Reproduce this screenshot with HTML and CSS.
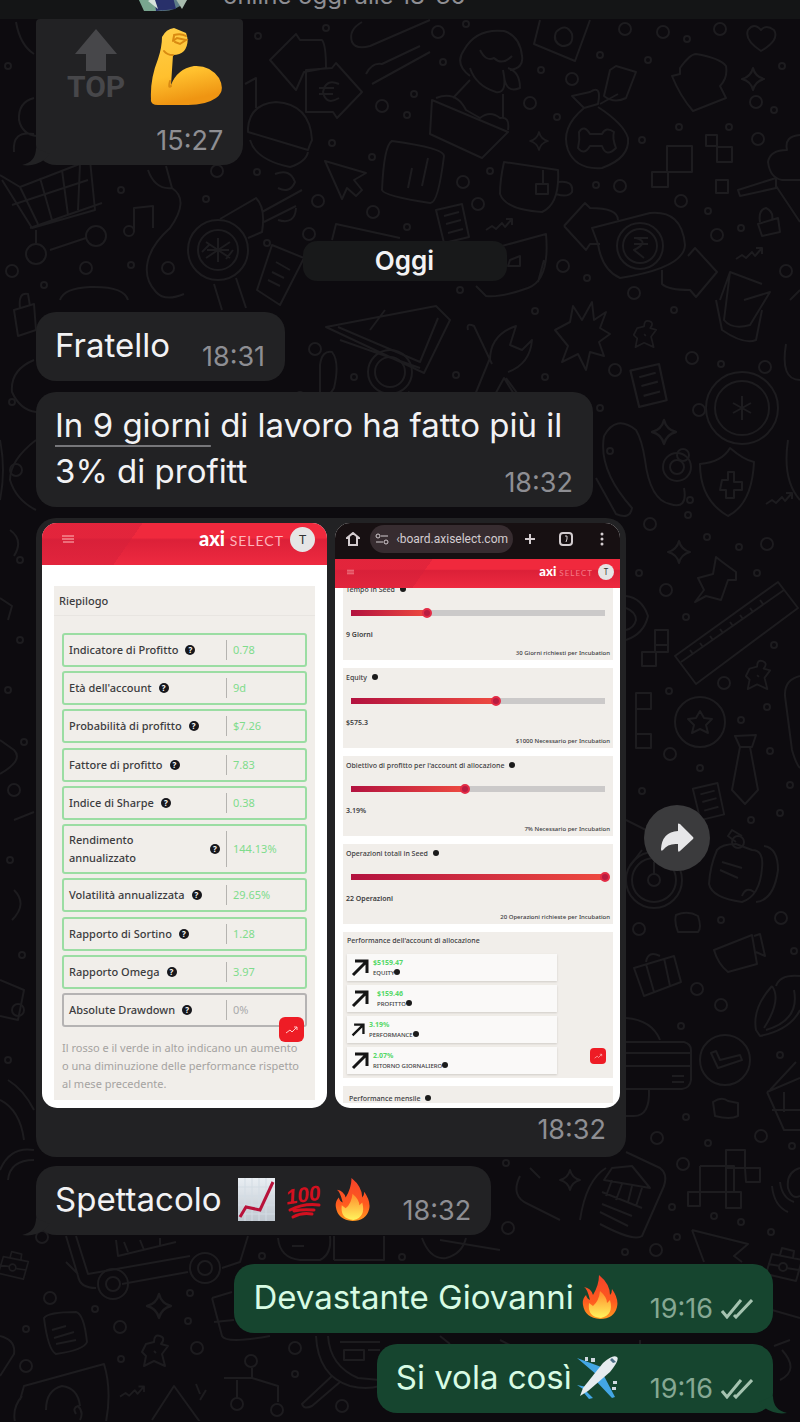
FILE: index.html
```html
<!DOCTYPE html>
<html lang="it">
<head>
  <meta charset="UTF-8">
  <meta name="viewport" content="width=device-width, initial-scale=1.0">
  <title>Chat</title>
  <link rel="stylesheet" href="styles.css">
</head>
<body>
  <!-- wallpaper -->
  <svg class="wallpaper" viewBox="0 0 800 1422" preserveAspectRatio="xMidYMin slice" aria-hidden="true">
    <defs>
      <marker id="dot" markerWidth="10" markerHeight="10" refX="5" refY="5" markerUnits="userSpaceOnUse"><circle class="ring" cx="5" cy="5" r="3"/></marker>
      <marker id="ring" markerWidth="18" markerHeight="18" refX="9" refY="9" markerUnits="userSpaceOnUse"><circle class="ring" cx="9" cy="9" r="6"/></marker>
      <symbol id="star" viewBox="0 0 20 20" overflow="visible"><path d="M10 0Q12 8 20 10Q12 12 10 20Q8 12 0 10Q8 8 10 0Z"/></symbol>
      <symbol id="note" viewBox="0 0 36 40" overflow="visible"><path d="M2 6L28 0L35 33L10 39ZM10 12L25 8M12 20L27 16M14 29L29 25"/></symbol>
      <symbol id="zig" viewBox="0 0 26 14" overflow="visible"><path d="M0 12L6 8L10 11L16 5L19 9L26 1M20 1H26V7"/></symbol>
      <symbol id="pin" viewBox="0 0 30 36" overflow="visible"><path d="M6 10L14 8Q14 0 20 2T21 10L28 12L22 20L25 32L14 27L4 32L6 22L2 18ZM14 17L16 19"/></symbol>
      <symbol id="case" viewBox="0 0 36 36" overflow="visible"><path d="M4 8L34 14L28 35L-2 28ZM12 9L14 2L26 5L25 12M0 18L12 20M18 22L31 24"/><circle cx="15" cy="21" r="4"/></symbol>
    </defs>

    <path class="marks dots" d="M8 66L258 36L326 28L332 143L372 157L257 172L121 190L206 199L131 265L44 285L267 243L414 94L407 115L443 62L466 24L490 171L407 227L541 70L557 117L600 55L648 60L642 140L596 185L679 127L729 127L687 39L774 110L782 66L708 211L741 228L587 278L460 290L354 377L456 375L535 311L545 377L600 408L674 310L721 364L690 500L707 537L610 451L688 515L739 547L757 573L639 573L686 617L774 645L669 691L741 720L767 707L770 751L700 768L642 791L790 785L780 813L751 820L721 920L794 951L681 1026L780 1055L686 1117L708 1143L792 1146L672 1207L714 1216L741 1222L677 1237L771 1232L625 1252L190 1293L95 1309L26 1329L188 1321L121 1359L295 1374L262 1256L402 1257L506 1163L12 402L20 560L8 690L24 742L10 860L22 955L8 1060L300 395L20 640"/>
    <path class="marks rings" d="M382 106L318 201L309 234L373 212L168 268L86 268L12 271L217 171L438 32L530 103L572 79L625 29L663 32L720 29L756 102L758 139L463 182L478 204L620 186L681 201L717 235L786 271L563 266L634 293L315 349L444 422L615 370L692 358L765 367L699 410L683 455L650 524L767 544L666 590L724 683L670 754L781 918L639 929L697 989L721 1005L761 1136L683 1164L657 1138L656 1250L50 1298L26 1366L197 1348L295 1348L120 1327L42 1237L508 1228L342 1406L237 1404L277 1410L251 1361L16 470L14 790L18 1010"/>

    <!-- top left: cart, flash drive, note -->
    <path d="M0 175L20 187L90 160L95 210L32 228L2 180M20 187L38 224M40 178L52 220M62 170L68 215M80 164L78 210M12 205L88 180M30 228L102 203M36 230V245M50 250L86 238"/>
    <circle cx="36" cy="254" r="10"/><circle cx="96" cy="236" r="10"/>
    <path d="M148 170Q155 190 172 188L166 166M172 188Q190 200 170 228C145 250 140 275 156 292Q165 302 184 294M134 232V208L153 206V228"/>
    <circle cx="129" cy="231" r="5"/><path d="M16 22Q20 45 34 54M34 98Q18 102 19 120Q22 134 36 136M34 134Q12 130 14 152"/>
    <!-- magnifier with tools -->
    <circle cx="218" cy="250" r="30"/><circle cx="218" cy="250" r="20"/><path d="M206 242L230 258M206 258L230 242M218 238V262M207 250H229M202 252L210 244M226 259L233 250M220 219L256 198Q266 208 262 232L248 238M262 212L302 190M264 222L296 206M275 174Q290 168 295 182Q290 194 278 188M278 220Q295 225 296 208M214 284L222 310M236 278L246 308M272 245L304 258L280 305L257 290ZM272 272L284 278M268 280L280 286M276 262L290 270"/>
    <!-- tags, burger, cursor -->
    <path d="M270 60L296 34L300 40H322Q326 45 326 68L304 72L296 90ZM306 70L332 68L336 63L362 92L337 118L333 112H306ZM339 84Q326 78 323 92Q326 106 339 98M319 88H334M319 94H333M362 22Q348 30 352 42Q356 50 370 46L430 20M372 84L430 52M366 74Q372 62 382 64L420 46"/>
    <path d="M248 128Q250 104 276 102Q310 104 312 140Q310 144 308 150L248 132ZM250 140Q256 160 290 167Q306 162 308 152"/>
    <path d="M325 161L366 173L354 180L362 190L356 196L347 188L342 199ZM392 141Q384 145 382 190Q384 196 430 203Q438 204 444 156Q444 148 392 141ZM412 168L408 188M428 158L422 186"/>
    <path d="M245 84L256 78V108M332 240L336 224L400 238M60 300Q64 288 90 287Q124 286 128 300"/>
    <!-- dog in envelope, picture, bag -->
    <path d="M470 76Q454 64 464 50Q476 28 504 31Q520 36 522 56Q524 68 510 70M480 50Q486 62 494 58Q502 66 512 56M470 68Q476 86 496 92Q508 94 503 70M508 68Q520 72 520 88Q506 94 504 76M470 80L453 98M503 94V118M432 100L508 132L482 158L430 134ZM436 98Q456 90 466 110L480 118Q490 110 500 118Q510 116 508 130"/>
    <path d="M540 20L534 44L575 61L590 20M556 32Q566 22 572 34Q574 46 562 46Q552 42 556 32M616 66L636 72L626 98Q614 104 604 96L610 70ZM572 96L590 92Q602 84 598 104L584 108ZM584 108Q560 128 568 150Q576 170 602 168Q630 158 628 138Q624 124 598 107M579 132Q584 124 590 134H602Q606 126 614 132Q612 138 616 148Q606 158 602 146H590Q584 156 578 148Q580 140 579 132ZM600 104L618 94"/>
    <path d="M680 68Q690 54 696 54Q720 58 726 66Q728 78 720 86L726 98L693 111Q680 96 672 76L680 74ZM748 30Q754 22 761 30Q766 24 774 30Q780 40 761 51Q744 40 748 30Z"/>
    <use href="#star" x="742" y="68" width="22" height="22"/><use href="#star" x="530" y="132" width="18" height="18"/>
    <path d="M667 146H692V172H667ZM652 172H668V187H652ZM706 135H717V146H706ZM717 147H732V162H717ZM716 180H728V193H716ZM800 135Q784 136 787 150Q770 150 768 162Q770 178 782 180H800M738 190L776 178V188L740 196ZM776 186L800 222"/>
    <path d="M504 162L558 170Q560 204 542 212Q506 210 500 194Q500 180 504 162ZM543 170V184M536 184H548V194H536ZM558 182Q574 180 572 192Q568 198 556 194"/>
    <use href="#note" x="434" y="204" width="36" height="40"/><use href="#zig" x="486" y="218" width="26" height="14"/><use href="#zig" x="736" y="247" width="26" height="14"/>
    <path d="M564 226L585 203L590 208Q618 208 618 220M564 226L586 250L590 244H600M592 228L650 213Q682 210 685 245Q684 268 620 278Q602 270 598 244ZM662 270V284Q668 290 690 290L696 297L717 272L695 248L688 256M634 238H648M634 244H648M636 238Q650 242 634 250L644 258"/>
    <circle cx="640" cy="246" r="23"/><circle cx="640" cy="246" r="17"/>
    <path d="M760 222Q758 210 766 208Q774 212 772 220M758 224L778 218L780 232L762 236ZM720 300L730 272L762 284M730 272L724 320Q732 330 750 325L770 292L744 300M502 246L546 234Q550 280 528 288Q500 298 486 296L476 286M510 260L520 256V266H508ZM538 282L544 260"/>
    <!-- ruler, tools and star -->
    <path d="M326 327L436 306L450 320L424 373ZM338 327L420 362L438 318M370 330L385 310M340 340L420 368M468 330Q466 322 474 326L492 364M490 358L468 412Q470 424 480 422L504 378L530 420Q534 424 528 408L506 378M490 360Q490 335 516 326L510 345L522 350L532 340Q530 364 508 372"/>
    <path d="M555 330L570 322L573 306L582 320L592 302L594 320L606 312L600 328L610 334L599 342L604 356L590 352L586 370L578 354L562 362L568 346Z"/>
    <use href="#pin" x="632" y="318" width="26" height="34"/><use href="#note" x="628" y="364" width="40" height="44"/>
    <circle cx="390" cy="372" r="22"/><circle cx="390" cy="372" r="15"/><path d="M320 365Q322 350 332 352Q340 362 334 388Q326 402 320 392ZM408 392L412 394M716 300L722 330Q744 345 756 340L762 310"/>
    <circle cx="742" cy="408" r="36"/><circle cx="742" cy="408" r="27"/><path d="M742 396V420M733 403L751 413M733 413L751 403"/>
    <use href="#star" x="652" y="414" width="24" height="36"/><circle cx="677" cy="467" r="14"/><circle cx="677" cy="467" r="7"/>
    <path d="M604 436Q598 470 632 508Q630 520 616 514L596 478M604 436Q616 414 636 430Q642 440 645 460Q650 500 670 504Q688 510 684 488M700 464Q722 462 730 448Q744 460 754 462Q752 504 728 516Q700 500 700 464ZM722 480H728V472H734V482H742V490H734V498H726V490H720Z"/>
    <use href="#zig" x="766" y="492" width="26" height="14"/><path d="M790 300L800 290M786 344Q780 380 800 380M788 440Q782 480 800 500"/>
    <!-- left edge -->
    <path d="M14 310L34 304L36 330L18 336ZM20 308Q18 292 28 294L30 306M34 360Q10 370 12 392Q20 410 36 412M36 440Q10 460 10 480Q16 500 36 510M0 440Q6 470 0 500M0 598L12 606L8 620M10 530Q24 540 14 556M0 740L14 750Q24 760 0 774M14 820L34 812M14 890Q28 904 12 920M0 980L24 990L18 1020L0 1016M8 1080Q24 1090 34 1110M0 1100Q20 1110 24 1140"/>
    <!-- right column -->
    <use href="#star" x="668" y="541" width="22" height="22"/>
    <path d="M716 557Q722 562 736 572L736 580L728 580L721 600L706 596L695 602L704 590L698 578L713 574ZM675 656L778 582L798 608L696 684ZM681 662L784 590M690 650L693 654M700 643L703 647M710 636L713 640M720 629L723 633M730 622L733 626M740 615L743 619M750 608L753 612M760 600L763 604M655 630H668V652H655ZM642 652H656V666H642ZM668 645H655M636 693H651V709H636ZM636 709V734M636 734H651V748H636Z"/>
    <path d="M626 596Q642 598 648 616Q644 634 626 640M626 608Q636 612 636 620Q634 628 626 630"/>
    <use href="#pin" x="744" y="658" width="28" height="36"/><circle cx="700" cy="722" r="25"/><path d="M700 711L704 718L712 719L706 725L708 733L700 729L692 733L694 725L688 719L696 718Z"/>
    <path d="M735 736L756 735L752 747H740ZM740 747L732 790L745 804L758 790L750 747M800 676Q784 680 785 696L792 750Q796 764 800 768"/>
    <use href="#note" x="689" y="783" width="38" height="38"/>
    <circle cx="654" cy="880" r="28"/><circle cx="654" cy="880" r="22"/><circle cx="654" cy="880" r="6"/><path d="M626 820L650 832M630 866L642 850M654 874V862"/>
    <path d="M717 850Q722 844 736 844L752 850Q764 850 762 868Q760 896 742 902Q712 898 709 884Q710 866 717 850ZM764 846Q778 848 778 870Q774 900 756 902M722 862L742 868M720 870L738 878M736 842L728 836L732 830L742 836M742 896Q746 886 754 892"/><circle cx="738" cy="842" r="6"/>
    <path d="M676 915Q688 910 698 916Q702 928 698 932H678Q674 922 676 915ZM714 950L752 935L757 964L728 972Q718 964 714 950ZM754 936L760 934L765 956L756 952M634 968L674 956L681 982L644 996ZM646 964L654 992M664 958L670 986M646 962Q648 950 660 956"/>
    <path d="M626 1018Q652 1020 660 1040M626 1042H684Q691 1044 691 1050V1080Q690 1088 682 1089H626M626 1053H690M626 1066H691M672 1076H684M672 1082H684M649 1090Q650 1116 634 1116H626"/>
    <circle cx="725" cy="1060" r="25"/><path d="M711 1053L716 1051L720 1060L740 1055L742 1060L718 1068Z"/>
    <path d="M772 986Q752 1008 756 1030L760 1036Q790 1030 800 1010M772 986Q782 1000 764 1028M776 986Q780 974 800 976M766 1030Q800 1020 794 990M713 1102Q722 1096 728 1101L738 1103V1116Q730 1120 715 1116ZM767 1092L800 1078M767 1092L784 1130H800M772 1110H800M784 1092V1112M770 1090L796 1062"/>
    <path d="M700 1166H734V1193M726 1150H745V1168H726ZM745 1168H760V1182H746ZM688 1192H700V1206H688ZM700 1166V1192H741V1208H726V1150M626 1152L660 1168Q668 1174 664 1186L642 1236Q634 1242 600 1224M580 1220Q586 1180 606 1168M612 1168L632 1166L650 1188L604 1180ZM612 1180L606 1196M622 1184L616 1200M632 1186L628 1202M642 1188L636 1206M602 1192L642 1208M602 1204L632 1216M600 1212L628 1226"/>
    <path d="M772 1186Q774 1206 788 1212M780 1182Q782 1198 794 1202M800 1168Q786 1172 788 1188Q792 1200 800 1196M692 1230L748 1244L734 1256L742 1262M692 1230L704 1262"/>
    <use href="#case" x="768" y="1246" width="36" height="36"/>
    <!-- bottom -->
    <path d="M66 1236L78 1276Q80 1288 96 1288M76 1236L88 1274L190 1256M122 1284L188 1272M222 1268L240 1262L248 1236M116 1240L118 1256L176 1242M124 1242L128 1252M140 1240L144 1250M160 1238V1246M66 1262L78 1274"/>
    <circle cx="113" cy="1284" r="15"/><circle cx="113" cy="1284" r="7"/><circle cx="205" cy="1268" r="15"/><circle cx="205" cy="1268" r="7"/>
    <path d="M278 1238Q280 1258 300 1260H320Q332 1254 330 1236M334 1260V1236M334 1260H384V1236M422 1238Q430 1260 446 1258Q462 1254 466 1238M292 1246H304"/>
    <use href="#case" x="0" y="1248" width="30" height="34"/><use href="#star" x="147" y="1294" width="24" height="24"/><use href="#star" x="560" y="1170" width="20" height="20"/>
    <path d="M44 1318Q48 1312 76 1312Q84 1314 87 1342Q84 1350 56 1354Q48 1350 44 1318ZM52 1330L66 1326M54 1338L74 1332M56 1344L76 1340"/><use href="#pin" x="140" y="1332" width="30" height="40"/>
    <path d="M212 1298L232 1292M212 1298L222 1336Q226 1344 270 1336M214 1322L234 1320M0 1336Q16 1340 14 1354L0 1376M20 1400L24 1386L104 1364Q112 1390 106 1422M46 1410Q46 1390 62 1386Q78 1388 80 1406M15 1422Q12 1408 22 1396M152 1420L174 1386L200 1422M224 1378H252V1368M252 1378L278 1386V1402M237 1380V1398M76 1414Q72 1408 78 1406Q84 1412 80 1420M196 1384L200 1394M206 1390L200 1400"/>
    <use href="#zig" x="120" y="1384" width="24" height="16"/>
    <path d="M316 1336Q318 1376 350 1386Q366 1390 380 1386M328 1336Q330 1366 358 1378L380 1380M332 1376L302 1404Q304 1410 312 1406L340 1382M340 1342H380M344 1350H364V1360H344ZM368 1350H380M0 1170Q10 1146 34 1150M8 1180Q10 1160 34 1160M790 1340L774 1346M782 1350Q800 1370 780 1380M772 1310L800 1318M440 1240L500 1250M520 1176Q510 1196 528 1204L560 1220M640 1340V1345M530 1168L540 1178M500 1340L510 1345M440 1336L450 1344"/>
  </svg>

  <header class="topbar">
    <svg class="avatar" viewBox="0 0 62 62" role="img" aria-label="Foto profilo">
      <circle cx="31" cy="31" r="31" fill="#5d7c86"/>
      <path d="M6 49L20 40L30 62H12Z" fill="#79a58f"/><path d="M22 46L40 44L44 60L24 62Z" fill="#28306a"/><path d="M40 44L60 42L50 60Z" fill="#a8bcae"/><path d="M16 52L22 48L26 60Z" fill="#d7e2dc"/>
    </svg>
    <span class="status">online oggi alle 18-36</span>
  </header>

  <main class="chat">
    <div class="bubble in reaction">
      <div class="stickers">
        <span class="top-emoji">
          <svg viewBox="0 0 42 42" aria-hidden="true"><path fill="currentColor" d="M21 0L42 25H31V42H11V25H0Z"/></svg>
          TOP
        </span>
        <svg class="arm" viewBox="0 0 73 78" role="img" aria-label="Bicipite">
          <defs><linearGradient id="skin" x1="0" y1="0" x2="0.2" y2="1"><stop offset="0" stop-color="#ffcf49"/><stop offset=".65" stop-color="#ffc02e"/><stop offset="1" stop-color="#ef9512"/></linearGradient></defs>
          <path fill="url(#skin)" d="M12 10Q16 2 24 1L36 6Q40 16 34 24Q30 28 23 28L21 58Q27 42 44 39Q60 38 69 51Q76 64 66 71Q56 78 38 78H8Q0 78 1 72Q0 52 8 32Q12 20 12 10Z"/>
          <path fill="none" stroke="#d98a12" stroke-width="2" stroke-linecap="round" d="M24 8Q31 6 36 9M24 9L23 14M23 14L27 11L36 13L30 17L25 15M23 28Q17 28 14 24M21 59Q18 62 20 54"/>
        </svg>
      </div>
      <time>15:27</time>
      <svg class="tail" viewBox="0 0 28 18" aria-hidden="true"><path d="M14 0Q14 14 0 17Q12 19 22 12L28 6Z"/></svg>
    </div>

    <div class="date">Oggi</div>

    <div class="bubble in">
      <p>Fratello</p>
      <time>18:31</time>
    </div>

    <div class="bubble in long">
      <span class="underlined">In 9 giorni</span> di lavoro ha fatto più il 3% di profitt
      <time>18:32</time>
    </div>

    <div class="media-row">
      <div class="bubble in media">
        <div class="shots">
          <section class="shot">
            <div class="brandbar">
              <svg class="menu" viewBox="0 0 12 10" aria-hidden="true"><path d="M0 2H12M0 5H12M1 8H12"/></svg>
              <span class="brand"><b>axi</b> SELECT</span>
              <span class="user">T</span>
            </div>
            <div class="summary">
              <h2>Riepilogo</h2>
              <table>
                <tbody>
                  <tr><th>Indicatore di Profitto <i class="help">?</i></th><td>0.78</td></tr>
                  <tr><th>Età dell'account <i class="help">?</i></th><td>9d</td></tr>
                  <tr><th>Probabilità di profitto <i class="help">?</i></th><td>$7.26</td></tr>
                  <tr><th>Fattore di profitto <i class="help">?</i></th><td>7.83</td></tr>
                  <tr><th>Indice di Sharpe <i class="help">?</i></th><td>0.38</td></tr>
                  <tr class="tall"><th><span>Rendimento annualizzato</span> <i class="help">?</i></th><td>144.13%</td></tr>
                  <tr><th>Volatilità annualizzata <i class="help">?</i></th><td>29.65%</td></tr>
                  <tr><th>Rapporto di Sortino <i class="help">?</i></th><td>1.28</td></tr>
                  <tr><th>Rapporto Omega <i class="help">?</i></th><td>3.97</td></tr>
                  <tr class="neutral"><th>Absolute Drawdown <i class="help">?</i></th><td>0%</td></tr>
                </tbody>
              </table>
              <p class="legend">Il rosso e il verde in alto indicano un aumento o una diminuzione delle performance rispetto al mese precedente.</p>
              <button class="fab" aria-label="Grafico"><svg viewBox="0 0 14 10"><path d="M1 8L5 5L7 7L12 2M9 2H12V5"/></svg></button>
            </div>
          </section>

          <section class="shot">
            <div class="browser">
              <svg viewBox="0 0 14 14" aria-hidden="true"><path d="M7 1L13 6H11V13H3V6H1Z"/></svg>
              <span class="url">
                <svg viewBox="0 0 14 12" aria-hidden="true"><path d="M6 3H13M1 9H8"/><circle cx="3" cy="3" r="2"/><circle cx="11" cy="9" r="2"/></svg>
                ‹board.axiselect.com
              </span>
              <svg viewBox="0 0 14 14" aria-hidden="true"><path d="M7 2V12M2 7H12"/></svg>
              <svg viewBox="0 0 14 14" aria-hidden="true"><rect x="1" y="1" width="12" height="12" rx="3"/><path d="M6 4H8V7L7 10" stroke-width="1"/></svg>
              <svg viewBox="0 0 14 14" aria-hidden="true"><path stroke-linecap="round" stroke-width="3" d="M7 2V2M7 7V7M7 12V12"/></svg>
            </div>
            <div class="brandbar slim">
              <svg class="menu" viewBox="0 0 12 10" aria-hidden="true"><path d="M0 2H12M0 5H12M0 8H12"/></svg>
              <span class="brand"><b>axi</b> SELECT</span>
              <span class="user">T</span>
            </div>
            <div class="page">
              <div class="goal">
                <label for="seed">Tempo in Seed <i class="info"></i></label>
                <input type="range" id="seed" value="30" style="--fill: 0.3">
                <strong>9 Giorni</strong>
                <small>30 Giorni richiesti per Incubation</small>
              </div>
              <div class="goal">
                <label for="equity">Equity <i class="info"></i></label>
                <input type="range" id="equity" value="57" style="--fill: 0.57">
                <strong>$575.3</strong>
                <small>$1000 Necessario per Incubation</small>
              </div>
              <div class="goal">
                <label for="profit">Obiettivo di profitto per l'account di allocazione <i class="info"></i></label>
                <input type="range" id="profit" value="45" style="--fill: 0.45">
                <strong>3.19%</strong>
                <small>7% Necessario per Incubation</small>
              </div>
              <div class="goal">
                <label for="trades">Operazioni totali in Seed <i class="info"></i></label>
                <input type="range" id="trades" value="100" style="--fill: 1">
                <strong>22 Operazioni</strong>
                <small>20 Operazioni richieste per Incubation</small>
              </div>
              <div class="account">
                <h3>Performance dell'account di allocazione</h3>
                <div class="metric"><svg viewBox="0 0 18 18"><path d="M2 16L15 3M4 2H16V14"/></svg><p><b>$5159.47</b>EQUITY<i class="info"></i></p></div>
                <div class="metric indent"><svg viewBox="0 0 18 18"><path d="M2 16L15 3M4 2H16V14"/></svg><p><b>$159.46</b>PROFITTO<i class="info"></i></p></div>
                <div class="metric compact"><svg viewBox="0 0 18 18"><path d="M2 16L15 3M4 2H16V14"/></svg><p><b>3.19%</b>PERFORMANCE<i class="info"></i></p></div>
                <div class="metric"><svg viewBox="0 0 18 18"><path d="M2 16L15 3M4 2H16V14"/></svg><p><b>2.07%</b>RITORNO GIORNALIERO<i class="info"></i></p></div>
                <button class="fab mini" aria-label="Grafico"><svg viewBox="0 0 14 10"><path d="M1 8L5 5L7 7L12 2M9 2H12V5"/></svg></button>
              </div>
              <div class="monthly">Performance mensile <i class="info"></i></div>
            </div>
          </section>
        </div>
        <time>18:32</time>
      </div>
      <button class="forward" aria-label="Inoltra">
        <svg viewBox="0 0 34 30"><path d="M18 1Q18 0 20 1L33 14Q34 15 33 16L20 28Q18 30 18 27V21Q8 20 3 27Q1 29 1 26Q2 9 18 8Z"/></svg>
      </button>
    </div>

    <div class="bubble in last-in">
      <p>Spettacolo</p>
      <span class="emojis">
        <svg viewBox="0 0 37 43" role="img" aria-label="Grafico in salita">
          <defs><linearGradient id="paper" x1="0" y1="0" x2="0" y2="1"><stop offset="0" stop-color="#e9eef3"/><stop offset="1" stop-color="#bfc7cf"/></linearGradient></defs>
          <rect width="37" height="43" fill="url(#paper)"/><path d="M7 0V43M14 0V43M21 0V43M28 0V43M0 9H37M0 18H37M0 27H37M0 36H37" stroke="#d3dce4"/><path d="M2 39L8 29L22 32L35 4" fill="none" stroke="#b8123a" stroke-width="3"/>
        </svg>
        <svg class="score" viewBox="0 0 37 43" role="img" aria-label="100">
          <g transform="rotate(-8 18 20)"><text x="0" y="24" class="hundred">100</text></g><path d="M4 32Q18 25 33 27M8 33Q16 31 28 32M7 39Q16 34 26 36" fill="none" stroke="#d3101f" stroke-width="3" stroke-linecap="round"/>
        </svg>
        <svg viewBox="0 0 36 44" role="img" aria-label="Fuoco">
          <defs>
            <linearGradient id="flame" x1="0" y1="0" x2="0" y2="1"><stop offset="0" stop-color="#f4432a"/><stop offset=".6" stop-color="#ff5a1f"/><stop offset="1" stop-color="#ff9a1f"/></linearGradient>
            <linearGradient id="core" x1="0" y1="0" x2="0" y2="1"><stop offset="0" stop-color="#ff8a2b"/><stop offset="1" stop-color="#fff45d"/></linearGradient>
          </defs>
          <path id="flame-outer" fill="url(#flame)" d="M17 0Q28 9 28 20Q30 18 30 14Q37 24 35 32Q32 44 18 44Q3 43 1 30Q0 24 4 20Q5 24 8 25Q5 13 2 12Q9 13 11 20Q17 10 17 0Z"/>
          <path id="flame-core" fill="url(#core)" d="M18 16Q25 22 25 28L28 25Q32 40 19 43Q5 42 7 28L11 31Q17 26 18 16Z"/>
        </svg>
      </span>
      <time>18:32</time>
      <svg class="tail" viewBox="0 0 28 18" aria-hidden="true"><path d="M14 0Q14 14 0 17Q12 19 22 12L28 6Z"/></svg>
    </div>

    <div class="bubble out first-out">
      <p>Devastante Giovanni</p>
      <svg class="emoji" viewBox="0 0 36 44" role="img" aria-label="Fuoco"><use href="#flame-outer"/><use href="#flame-core"/></svg>
      <time>19:16 <svg class="ticks" viewBox="0 0 32 20"><path d="M1 12L6 18L20 1M13 16L15 18L31 1"/></svg></time>
    </div>

    <div class="bubble out">
      <p>Si vola così</p>
      <svg class="emoji plane" viewBox="0 0 42 44" role="img" aria-label="Aereo">
        <path fill="#cfd8df" d="M9 2H12V6H9ZM15 3H19V7H15ZM37 26H41V29H37ZM36 32H40V35H36Z"/>
        <path fill="#43a6e4" d="M1 3L28 13L21 20ZM28 21L39 42L36 43L20 26ZM1 30L11 32L7 34ZM10 36L17 43L13 44L8 38Z"/>
        <path fill="#e6ebef" d="M41 2Q44 5 34 17L12 36L4 41L7 33L27 8Q37 -1 41 2Z"/><path fill="#4b6d85" d="M36 3L40 7L37 8L34 5Z"/>
      </svg>
      <time>19:16 <svg class="ticks" viewBox="0 0 32 20"><path d="M1 12L6 18L20 1M13 16L15 18L31 1"/></svg></time>
      <svg class="tail" viewBox="0 0 28 18" aria-hidden="true"><path d="M14 0Q14 14 0 17Q12 19 22 12L28 6Z"/></svg>
    </div>
  </main>
</body>
</html>
```
FILE: styles.css
```css
* {
  box-sizing: border-box;
}
body {
  position: relative;
  margin: 0;
  background: #0d0b0f;
  color: #f2f2f4;
  font-family: Inter, "Liberation Sans", sans-serif;
}
p, h2, h3 {
  margin: 0;
}
button {
  border: none;
  padding: 0;
}

/* wallpaper */
.wallpaper {
  position: absolute;
  top: 0;
  left: 0;
  width: 100%;
  height: 100%;
  z-index: -1;
  fill: none;
  stroke: #1d1c1f;
  stroke-width: 2;
  stroke-linejoin: round;
}
.wallpaper .marks {
  stroke: none;
}
.wallpaper .ring {
  fill: none;
  stroke: #1d1c1f;
  stroke-width: 2;
}
.dots {
  marker: url(#dot);
}
.rings {
  marker: url(#ring);
}

/* header */
.topbar {
  display: flex;
  align-items: flex-end;
  gap: 29px;
  height: 19px;
  padding-left: 132px;
  overflow: hidden;
  background: #141516;
}
.avatar {
  width: 62px;
  height: 62px;
  margin-bottom: 8px;
}
.status {
  margin-bottom: 8px;
  font-size: 24px;
  line-height: 30px;
  color: #8e8e93;
}

/* messages */
.chat {
  display: flex;
  flex-direction: column;
  align-items: flex-start;
  padding: 0 27px 8px 36px;
}
.bubble {
  position: relative;
  display: flex;
  align-items: center;
  margin-top: 11px;
  padding: 10px 20px 13px 19px;
  border-radius: 20px;
  background: #222224;
  font-size: 33px;
  line-height: 46px;
}
.bubble time {
  align-self: flex-end;
  margin-left: 32px;
  margin-bottom: -3px;
  font-size: 27px;
  line-height: 28px;
  color: #8e8e93;
}
.tail {
  position: absolute;
  left: -14px;
  bottom: -1px;
  width: 28px;
  height: 18px;
  fill: #222224;
}
.reaction {
  flex-direction: column;
  margin-top: 0;
  padding: 8px 20px 13px 31px;
  border-top-left-radius: 4px;
  border-top-right-radius: 4px;
}
.stickers {
  display: flex;
  align-items: center;
  gap: 25px;
}
.top-emoji {
  display: flex;
  flex-direction: column;
  align-items: center;
  color: #47474a;
  font: bold 30px/32px Roboto, sans-serif;
}
.top-emoji svg {
  width: 42px;
  height: 42px;
}
.arm {
  width: 73px;
  height: 78px;
}
.reaction time {
  margin-top: 22px;
}
.date {
  align-self: center;
  width: 204px;
  margin-top: 76px;
  margin-bottom: 20px;
  border-radius: 14px;
  background: #18191a;
  font-size: 26px;
  font-weight: 600;
  line-height: 40px;
  text-align: center;
}
.long {
  display: block;
  max-width: 557px;
}
.long time {
  float: right;
  margin-top: 21px;
}
.underlined {
  text-decoration: underline;
  text-decoration-color: #77777a;
  text-decoration-thickness: 2px;
  text-underline-offset: 8px;
  text-decoration-skip-ink: none;
}
.last-in {
  margin-top: 9px;
}
.emojis {
  display: flex;
  gap: 11px;
  margin-left: 16px;
}
.emojis svg {
  width: 37px;
  height: 43px;
}
.emojis .score {
  overflow: visible;
}
.hundred {
  fill: #d3101f;
  font: italic 900 21px "Liberation Sans", sans-serif;
}
.out {
  align-self: flex-end;
  background: #16452f;
  color: #d8fbe4;
}
.first-out {
  margin-top: 29px;
}
.out time {
  display: flex;
  align-items: center;
  gap: 8px;
  color: #86a894;
}
.out .tail {
  left: auto;
  right: -14px;
  transform: scaleX(-1);
  fill: #16452f;
}
.emoji {
  width: 36px;
  height: 44px;
  margin-left: 8px;
}
.plane {
  width: 42px;
  margin-left: 4px;
}
.ticks {
  width: 32px;
  height: 20px;
  fill: none;
  stroke: #a5c3b0;
  stroke-width: 3;
}

/* shared pictures */
.media-row {
  display: flex;
  align-items: center;
  gap: 18px;
  width: 100%;
  margin-top: 11px;
}
.media {
  flex-direction: column;
  flex: 0 1 590px;
  margin: 0;
  padding: 5px 6px 13px;
}
.media time {
  margin: 8px 14px 0;
}
.shots {
  display: grid;
  grid-template-columns: 1fr 1fr;
  gap: 8px;
  width: 100%;
}
.shot {
  display: flex;
  flex-direction: column;
  aspect-ratio: 285 / 585;
  overflow: hidden;
  border-radius: 15px;
  background: #fff;
  color: #3c3c3e;
  font-family: "Noto Sans", sans-serif;
  font-size: 11px;
  line-height: 18px;
}
.forward {
  display: grid;
  place-items: center;
  flex: none;
  width: 66px;
  height: 66px;
  border-radius: 50%;
  background: #3b3b3d;
}
.forward svg {
  width: 34px;
  height: 30px;
  fill: #e6e6e8;
}

/* red bar */
.brandbar {
  display: flex;
  align-items: center;
  gap: 6px;
  flex: none;
  height: 42px;
  padding: 0 12px 10px 20px;
  background:
    linear-gradient(125deg, #d5203a80 0 32%, #f0293d00 32%),
    linear-gradient(#f0293d 0 35%, #dc2038 40%, #ee2a40);
  color: #fff;
}
.menu {
  width: 12px;
  height: 10px;
  margin-right: auto;
  stroke: #fbb;
}
.brand {
  color: #ffb3ba;
  font: 14px/20px Lato, sans-serif;
  letter-spacing: 1px;
}
.brand b {
  color: #fff;
  font-size: 20px;
  font-weight: 900;
  letter-spacing: 0;
}
.user {
  width: 25px;
  height: 25px;
  border-radius: 50%;
  background: #e5e5e5;
  color: #333;
  font-size: 13px;
  line-height: 25px;
  text-align: center;
}
.slim {
  height: 29px;
  gap: 5px;
  padding: 0 6px 3px 12px;
}
.slim .menu {
  width: 7px;
}
.slim .brand {
  color: #f77b86;
  font-size: 8px;
}
.slim .brand b {
  font-size: 13px;
}
.slim .user {
  width: 16px;
  height: 16px;
  font-size: 8px;
  line-height: 16px;
}

/* summary */
.summary {
  position: relative;
  display: flex;
  flex-direction: column;
  flex: 1;
  margin: 21px 12px 8px;
  padding: 0 8px 7px;
  background: #f1eeea;
}
.summary h2 {
  margin: 0 -8px 17px;
  padding: 6px 5px 5px;
  border-bottom: 1px solid #e8e5e1;
  font-size: 11px;
  font-weight: 500;
  line-height: 18px;
}
.summary table {
  display: flex;
  flex: 1;
}
.summary tbody {
  display: flex;
  flex-direction: column;
  justify-content: space-between;
  width: 100%;
}
.summary tr {
  display: flex;
  align-items: center;
  height: 34px;
  border: 2px solid #9bdda3;
  border-radius: 3px;
}
.summary .tall {
  height: 50px;
}
.summary th {
  display: flex;
  align-items: center;
  gap: 7px;
  flex: 1;
  padding: 0 6px 0 5px;
  font-weight: 500;
  text-align: left;
}
.tall th {
  justify-content: space-between;
}
.tall th span {
  width: 90px;
}
.summary td {
  width: 79px;
  padding: 1px 6px;
  border-left: 1px solid #b5b3b0;
  color: #7fdc8c;
}
.tall td {
  padding-top: 9px;
  padding-bottom: 9px;
}
.summary .neutral {
  border-color: #b5b3b3;
}
.neutral td {
  color: #aaa;
}
.help {
  width: 10px;
  height: 10px;
  flex: none;
  border-radius: 50%;
  background: #17171c;
  color: #fff;
  font: bold 8px/10px "Noto Sans", sans-serif;
  text-align: center;
}
.legend {
  margin-top: 12px;
  padding-right: 3px;
  color: #a5a3a1;
}
.fab {
  position: absolute;
  right: 11px;
  bottom: 58px;
  display: grid;
  place-items: center;
  width: 25px;
  height: 25px;
  border-radius: 6px;
  background: #ee1c25;
}
.fab svg {
  width: 14px;
  fill: none;
  stroke: #ffc9c9;
}

/* browser */
.browser {
  display: flex;
  align-items: center;
  gap: 22px;
  flex: none;
  height: 36px;
  padding: 0 11px 4px;
  background: #171012;
  color: #d4cdd0;
}
.browser svg {
  flex: none;
  width: 14px;
  height: 14px;
  fill: none;
  stroke: currentColor;
  stroke-width: 2;
}
.url {
  display: flex;
  align-items: center;
  justify-content: space-between;
  flex: 1;
  margin: 0 -12px;
  padding: 0 5px;
  border-radius: 14px;
  background: #372c30;
  font: 12px/28px Roboto, sans-serif;
  white-space: nowrap;
}
.browser .url svg {
  height: 12px;
  stroke-width: 1;
}

/* goals */
.page {
  display: flex;
  flex-direction: column;
  justify-content: flex-end;
  gap: 8px;
  flex: 1;
  min-height: 0;
  padding: 0 7px 5px 8px;
  overflow: hidden;
  font-size: 7px;
  line-height: 12px;
}
.goal, .account, .monthly {
  flex: none;
  background: #f1eeea;
  font-weight: 500;
}
.goal {
  display: flex;
  flex-direction: column;
  height: 80px;
  padding: 4px 3px;
}
.goal input {
  appearance: none;
  width: 266px;
  max-width: 100%;
  height: 10px;
  margin: 12px 0 11px;
  background:
    linear-gradient(90deg, #b3123f, #ee4a40) 5px center / calc((100% - 10px) * var(--fill)) 6px no-repeat,
    linear-gradient(#cbc9c9, #cbc9c9) center / calc(100% - 10px) 6px no-repeat;
}
.goal input::-webkit-slider-thumb {
  appearance: none;
  width: 10px;
  height: 10px;
  border: 2px solid #e32c46;
  border-radius: 50%;
  background: #b81c40;
}
.goal strong {
  font-weight: 600;
}
.goal small {
  margin-top: 6px;
  font-size: 6px;
  text-align: right;
}
.info {
  display: inline-block;
  width: 6px;
  height: 6px;
  margin-left: 3px;
  border-radius: 50%;
  background: #1b1b1b;
}
.account {
  position: relative;
  display: flex;
  flex-direction: column;
  gap: 4px;
  padding: 3px 4px 4px;
}
.account h3 {
  margin-bottom: 3px;
  font-size: 7px;
  font-weight: 500;
  line-height: 12px;
}
.metric {
  display: flex;
  align-items: center;
  gap: 4px;
  width: 210px;
  height: 27px;
  padding: 0 4px;
  background: #faf9f8;
  box-shadow: 0 1px 2px #cfccc8;
}
.metric svg {
  width: 18px;
  fill: none;
  stroke: #151515;
  stroke-width: 3;
}
.indent {
  gap: 8px;
}
.compact svg {
  width: 14px;
}
.metric p {
  font-size: 6px;
  line-height: 11px;
}
.metric .info {
  margin-left: 0;
}
.metric b {
  display: block;
  color: #55d868;
  font-size: 7px;
}
.mini {
  right: 7px;
  bottom: 14px;
  width: 16px;
  height: 16px;
  border-radius: 4px;
}
.mini svg {
  width: 9px;
}
.monthly {
  height: 17px;
  padding: 7px 6px 0;
  overflow: hidden;
}
```
